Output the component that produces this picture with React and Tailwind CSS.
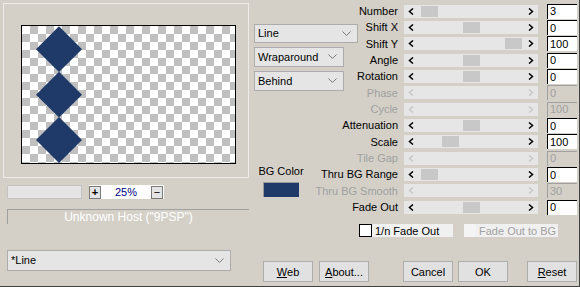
const rows = [
  { label: 'Number', pos: 17, val: '3' },
  { label: 'Shift X', pos: 59, val: '0' },
  { label: 'Shift Y', pos: 101, val: '100' },
  { label: 'Angle', pos: 59, val: '0' },
  { label: 'Rotation', pos: 59, val: '0' },
  { label: 'Phase', val: '0', off: true },
  { label: 'Cycle', val: '100', off: true },
  { label: 'Attenuation', pos: 59, val: '0' },
  { label: 'Scale', pos: 38, val: '100' },
  { label: 'Tile Gap', val: '0', off: true },
  { label: 'Thru BG Range', pos: 17, val: '0' },
  { label: 'Thru BG Smooth', val: '30', off: true },
  { label: 'Fade Out', pos: 59, val: '0' },
];

function Chevron({ dir = 'down', color = '#7a7a7a' }) {
  if (dir === 'down') {
    return (
      <svg width="9" height="6" viewBox="0 0 9 6">
        <polyline points="0.5,0.5 4.5,4.5 8.5,0.5" fill="none" stroke={color} strokeWidth="1" />
      </svg>
    );
  }
  const pts = dir === 'left' ? '5,0.5 1.5,3.5 5,6.5' : '1,0.5 4.5,3.5 1,6.5';
  return (
    <svg width="6" height="7" viewBox="0 0 6 7">
      <polyline points={pts} fill="none" stroke={color} strokeWidth="1.5" />
    </svg>
  );
}

function Dropdown({ label, className }) {
  return (
    <div className={`flex items-center justify-between border border-[#acacac] bg-[#e5e5e5] pl-[3px] pr-[6px] ${className}`}>
      <span className="text-[11px] text-black">{label}</span>
      <Chevron />
    </div>
  );
}

function Slider({ pos, off }) {
  const c = off ? '#c8c8c8' : '#000';
  return (
    <div className="relative flex h-[13px] w-[134px] items-center justify-between bg-[#e6e6e6] px-[4px]">
      <Chevron dir="left" color={c} />
      {!off && <div className="absolute top-[1px] h-[11px] w-[17px] bg-[#c8c8c8]" style={{ left: pos }} />}
      <Chevron dir="right" color={c} />
    </div>
  );
}

function Button({ children }) {
  return (
    <div className="flex h-[21px] w-[50px] items-center justify-center border border-[#adadad] bg-[#e1e1e1] text-[11px] text-black">
      {children}
    </div>
  );
}

export default function App() {
  return (
    <div
      className="flex h-[287px] w-[580px] overflow-hidden border-r border-b border-[#404040] bg-[#d4d0c8] text-[11px]"
      style={{ fontFamily: '"Liberation Sans", Arial, sans-serif' }}
    >
      {/* left column */}
      <div className="flex w-[254px] shrink-0 flex-col pt-[3px] pl-[3px]">
        <div className="h-[175px] w-[246px] border border-[#eeece8]">
          <div className="mt-[21px] ml-[17px] h-[139px] w-[215px] overflow-hidden border border-black bg-[conic-gradient(#c0c0c0_25%,#fff_0_50%,#c0c0c0_0_75%,#fff_0)] bg-[length:16px_16px]">
            <svg width="213" height="137" viewBox="0 0 213 137">
              <g fill="#1f3a68">
                <polygon points="37,0.3 60,23.3 37,46 14,23.3" />
                <polygon points="37,45.7 60,68.7 37,91.5 14,68.7" />
                <polygon points="37,91 60,114 37,137 14,114" />
              </g>
            </svg>
          </div>
        </div>
        <div className="mt-[7px] ml-[4px] flex items-center">
          <div className="h-[14px] w-[75px] border border-[#c4c4c4] bg-[#e4e4e4]" />
          <div className="ml-[7px] flex h-[14px] w-[75px] items-center justify-between bg-white">
            <div className="flex h-[13px] w-[12px] items-center justify-center border border-[#7a7a7a] bg-[#e4e4e4] text-[11px] font-bold leading-none text-black">+</div>
            <span className="text-[11px] text-[#000080]">25%</span>
            <div className="mr-[1px] flex h-[13px] w-[12px] items-center justify-center border border-[#7a7a7a] bg-[#e4e4e4] text-[11px] leading-none text-black">−</div>
          </div>
        </div>
        <div className="mt-[10px] ml-[4px] flex h-[15px] w-[242px] items-center justify-center border-t border-l border-[#a0a0a0] border-r-white border-b-white text-[12px] text-white">
          Unknown Host ("9PSP")
        </div>
        <Dropdown label="*Line" className="mt-[26px] ml-[4px] h-[21px] w-[224px]" />
      </div>

      {/* right part */}
      <div className="flex w-[326px] shrink-0 flex-col">
        <div className="flex">
          <div className="flex w-[104px] shrink-0 flex-col pt-[24px]">
            <Dropdown label="Line" className="h-[19px] w-[104px]" />
            <Dropdown label="Wraparound" className="mt-[4px] h-[20px] w-[90px]" />
            <Dropdown label="Behind" className="mt-[4px] h-[20px] w-[90px]" />
            <div className="mt-[74px] ml-[2px] flex w-[50px] flex-col items-center">
              <span className="text-[11px] leading-[13px] text-black">BG Color</span>
              <div className="mt-[4px] h-[15px] w-[36px] border-t border-l border-[#9a9a9a] border-r-white border-b-white bg-[#1f3a68]" />
            </div>
          </div>
          <div className="flex flex-col pt-[3px]">
            {rows.map((r) => (
              <div key={r.label} className="flex h-[16.33px] items-center">
                <div className="flex w-[40px] justify-end">
                  <span className={`whitespace-nowrap text-[11px] ${r.off ? 'text-[#a0a0a0]' : 'text-black'}`}>{r.label}</span>
                </div>
                <div className="ml-[6px]">
                  <Slider pos={r.pos} off={r.off} />
                </div>
                <div
                  className={`ml-[9px] flex h-[15px] w-[30px] items-center border-t border-l pl-[2px] text-[11px] ${
                    r.off ? 'border-[#a0a0a0] text-[#a0a0a0]' : 'border-black bg-white text-black'
                  }`}
                >
                  {r.val}
                </div>
              </div>
            ))}
          </div>
        </div>

        <div className="mt-[9px] flex items-center pl-[105px]">
          <div className="h-[13px] w-[13px] border border-black bg-white" />
          <div className="flex h-[13px] w-[81px] items-center whitespace-nowrap bg-[#f0f0f0] pl-[3px] text-[11px] text-black">1/n Fade Out</div>
          <div className="ml-[11px] h-[13px] w-[12px] bg-[#f4f4f4]" />
          <div className="flex h-[13px] w-[82px] items-center whitespace-nowrap bg-[#f0f0f0] pl-[3px] text-[11px] text-[#a0a0a0]">Fade Out to BG</div>
        </div>

        <div className="mt-[24px] flex pl-[9px]">
          <Button>
            <u>W</u>eb
          </Button>
          <div className="ml-[6px]">
            <Button>
              <u>A</u>bout...
            </Button>
          </div>
          <div className="ml-[34px]">
            <Button>Cancel</Button>
          </div>
          <div className="ml-[5px]">
            <Button>OK</Button>
          </div>
          <div className="ml-[19px]">
            <Button>
              <u>R</u>eset
            </Button>
          </div>
        </div>
      </div>
    </div>
  );
}
